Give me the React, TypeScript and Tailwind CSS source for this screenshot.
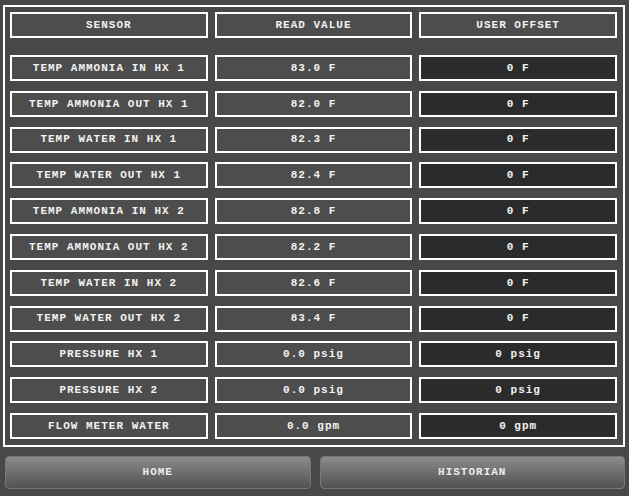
import React from "react"

const rows: [string, string, string][] = [
  ["TEMP AMMONIA IN HX 1", "83.0 F", "0 F"],
  ["TEMP AMMONIA OUT HX 1", "82.0 F", "0 F"],
  ["TEMP WATER IN HX 1", "82.3 F", "0 F"],
  ["TEMP WATER OUT HX 1", "82.4 F", "0 F"],
  ["TEMP AMMONIA IN HX 2", "82.8 F", "0 F"],
  ["TEMP AMMONIA OUT HX 2", "82.2 F", "0 F"],
  ["TEMP WATER IN HX 2", "82.6 F", "0 F"],
  ["TEMP WATER OUT HX 2", "83.4 F", "0 F"],
  ["PRESSURE HX 1", "0.0 psig", "0 psig"],
  ["PRESSURE HX 2", "0.0 psig", "0 psig"],
  ["FLOW METER WATER", "0.0 gpm", "0 gpm"],
]

const Cell: React.FC<{ children: React.ReactNode; dark?: boolean }> = ({ children, dark }) => (
  <div
    className={`flex h-[26px] items-center justify-center border-2 border-white text-[11px] tracking-[1px] text-[#f2f2f2] ${
      dark ? "bg-[#2b2b2b]" : "bg-[#4d4d4d]"
    }`}
  >
    {children}
  </div>
)

const App: React.FC = () => {
  return (
    <div className="h-[496px] w-[629px] overflow-hidden bg-[#484848] pt-[5px] font-['Liberation_Mono',monospace] font-bold">
      <div className="ml-[3px] w-[622px] border-2 border-white pb-[6px] pl-[5px] pr-[6px] pt-[5px]">
        <div className="grid grid-cols-3 gap-x-[7px]">
          <Cell>SENSOR</Cell>
          <Cell>READ VALUE</Cell>
          <Cell>USER OFFSET</Cell>
        </div>
        <div className="mt-[17px] grid grid-cols-3 gap-x-[7px] gap-y-[9.8px]">
          {rows.map(([name, value, offset]) => (
            <React.Fragment key={name}>
              <Cell>{name}</Cell>
              <Cell>{value}</Cell>
              <Cell dark>{offset}</Cell>
            </React.Fragment>
          ))}
        </div>
      </div>
      <div className="mt-[9px] flex gap-[9px] pl-[5px] pr-[4px]">
        {["HOME", "HISTORIAN"].map((label) => (
          <button
            key={label}
            className="flex h-[33px] flex-1 items-center justify-center rounded-[4px] border border-[#787878] bg-gradient-to-b from-[#8c8c8c] to-[#525252] text-[11px] font-bold tracking-[1px] text-[#ececec]"
          >
            {label}
          </button>
        ))}
      </div>
    </div>
  )
}

export default App
